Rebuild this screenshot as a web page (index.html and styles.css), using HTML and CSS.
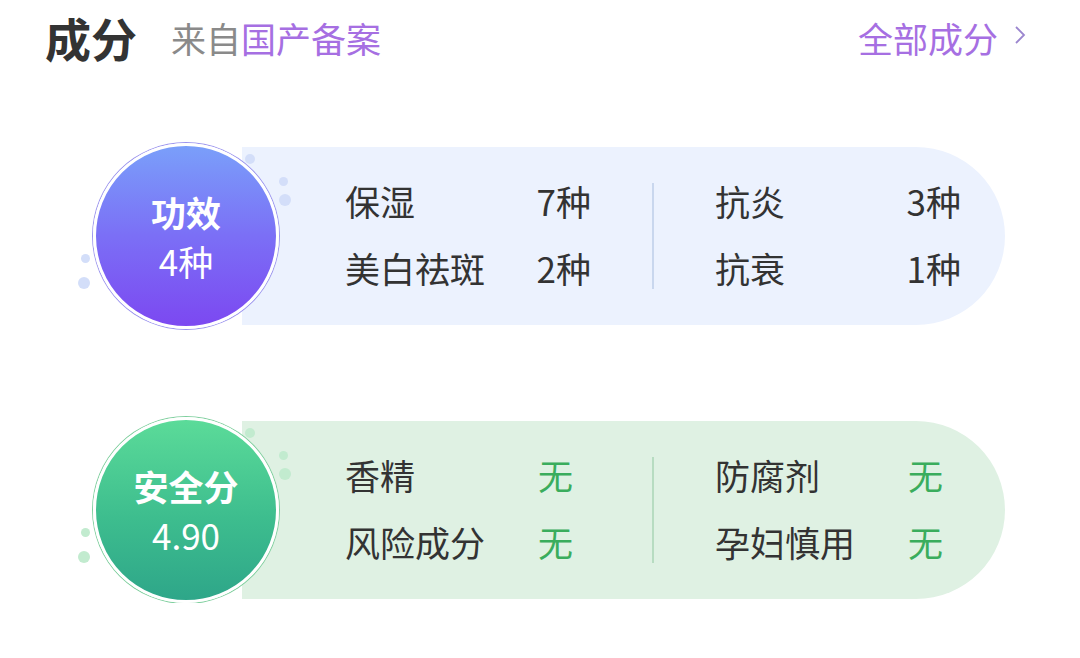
FILE: index.html
```html
<!DOCTYPE html>
<html lang="zh-CN">
<head>
    <meta charset="UTF-8">
    <meta name="viewport" content="width=device-width, initial-scale=1.0">
    <title>成分</title>
    <link rel="stylesheet" href="styles.css">
</head>
<body>
<header class="header">
    <h1 class="title">成分</h1>
    <span class="source">来自<em>国产备案</em></span>
    <a class="more" href="#">全部成分
        <svg class="chevron" width="12" height="20" viewBox="0 0 12 20"><polyline points="2,2 10,10 2,18" fill="none" stroke="#9b86cf" stroke-width="1.8"/></svg>
    </a>
</header>

<div class="card card-effect">
    <span class="dot d1"></span><span class="dot d2"></span><span class="dot d3"></span>
    <span class="dot d4"></span><span class="dot d5"></span>
    <div class="badge">
        <strong>功效</strong>
        <span>4种</span>
    </div>
    <div class="panel">
        <div class="col">
            <span>保湿</span><span class="val">7种</span>
            <span>美白祛斑</span><span class="val">2种</span>
        </div>
        <div class="divider"></div>
        <div class="col">
            <span>抗炎</span><span class="val">3种</span>
            <span>抗衰</span><span class="val">1种</span>
        </div>
    </div>
</div>

<div class="card card-safe">
    <span class="dot d1"></span><span class="dot d2"></span><span class="dot d3"></span>
    <span class="dot d4"></span><span class="dot d5"></span>
    <div class="badge">
        <strong>安全分</strong>
        <span>4.90</span>
    </div>
    <div class="panel">
        <div class="col">
            <span>香精</span><span class="val none">无</span>
            <span>风险成分</span><span class="val none">无</span>
        </div>
        <div class="divider"></div>
        <div class="col">
            <span>防腐剂</span><span class="val none">无</span>
            <span>孕妇慎用</span><span class="val none">无</span>
        </div>
    </div>
</div>
</body>
</html>
```

FILE: styles.css
```css
body {
    margin: 0;
    padding: 0;
    background: #fff;
    color: #333;
    font-family: "Noto Sans CJK SC", "Noto Sans", sans-serif;
}
.header {
    display: flex;
    align-items: center;
    height: 74px;
    padding: 0 54px 0 45px;
}
.title {
    margin: 0;
    font-size: 46px;
    font-weight: bold;
    line-height: 1;
    color: #333;
}
.source {
    margin-left: 34px;
    font-size: 35px;
    line-height: 1;
    color: #8a8a8a;
}
.source em {
    font-style: normal;
    color: #a66fe2;
}
.more {
    margin-left: auto;
    display: flex;
    align-items: center;
    gap: 16px;
    font-size: 35px;
    line-height: 1;
    color: #a66fe2;
    text-decoration: none;
}
.chevron {
    margin-top: -4px;
}

.card {
    position: relative;
    display: flex;
    align-items: center;
    width: 912px;
    margin-left: 93px;
}
.card-effect {
    margin-top: 69px;
}
.card-safe {
    margin-top: 88px;
}
.badge {
    position: relative;
    z-index: 1;
    flex: none;
    box-sizing: border-box;
    width: 186px;
    height: 186px;
    border-radius: 50%;
    border: 3px solid #fff;
    display: flex;
    flex-direction: column;
    align-items: center;
    justify-content: center;
    color: #fff;
    font-size: 35px;
    line-height: 49px;
}
.badge strong {
    font-weight: bold;
}
.card-effect .badge {
    background: linear-gradient(180deg, #7a9ffa 0%, #7b6ff6 50%, #7c48f1 100%);
    box-shadow: 0 0 0 1px #9c95ee;
}
.card-safe .badge {
    background: linear-gradient(180deg, #5bdb99 0%, #3dbd8e 55%, #2ea689 100%);
    box-shadow: 0 0 0 1px #7fcf9e;
}
.panel {
    flex: 1;
    display: flex;
    align-items: center;
    height: 178px;
    margin-left: -37px;
    padding-left: 103px;
    border-radius: 0 89px 89px 0;
    font-size: 35px;
    line-height: 35px;
}
.card-effect .panel {
    background: #ecf2fe;
}
.card-safe .panel {
    background: #dff1e3;
}
.col {
    display: grid;
    grid-template-columns: 1fr auto;
    row-gap: 32px;
    width: 246px;
    padding-bottom: 4px;
}
.val {
    text-align: right;
}
.val.none {
    color: #3aad5d;
    margin-right: 18px;
}
.divider {
    width: 2px;
    height: 106px;
    margin: 0 61px 0 61px;
}
.card-effect .divider {
    background: #c9d7ee;
}
.card-safe .divider {
    background: #b7dcc1;
}

.dot {
    position: absolute;
    z-index: 2;
    border-radius: 50%;
}
.card-effect .dot {
    background: #d3def9;
}
.card-safe .dot {
    background: #c2ebcf;
}
.d1 { left: 152px; top: 11px; width: 10px; height: 10px; }
.d2 { left: 186px; top: 34px; width: 9px; height: 9px; }
.d3 { left: 186px; top: 51px; width: 12px; height: 12px; }
.d4 { left: -12px; top: 111px; width: 9px; height: 9px; }
.d5 { left: -15px; top: 134px; width: 12px; height: 12px; }
```
